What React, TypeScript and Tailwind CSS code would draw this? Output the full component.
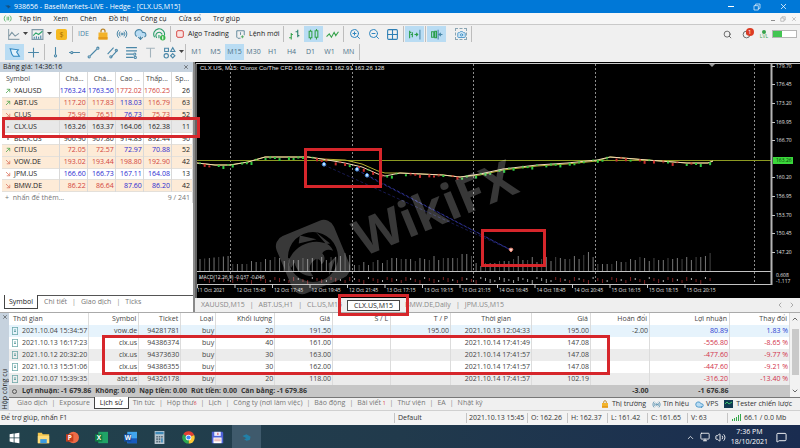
import type { ReactNode } from "react";
import { Camera, ChevronDown, ChevronLeft, ChevronRight, ChevronUp, Cloud, CloudDownload, Grid2x2, MessageSquare, Monitor, Radio, Search, Volume2, X, ZoomIn, ZoomOut } from "lucide-react";
import clsx from "clsx";

const menus = ["Tập tin", "Xem", "Chèn", "Đồ thị", "Công cụ", "Cửa sổ", "Trợ giúp"];
const timeframes = ["M1", "M5", "M15", "M30", "H1", "H4", "D1", "W1", "MN"];

// dir: u = up, d = down, n = unchanged; tone: r = red, b = blue, k = black
const quotes = [
  { s: "XAUUSD", dir: "u", v: ["1763.24", "1763.50", "1772.02", "1760.25"], tone: "bbrr", sp: "26", bg: "bg-white" },
  { s: "ABT.US", dir: "u", v: ["117.20", "117.83", "118.03", "116.79"], tone: "rrbr", sp: "63", bg: "bg-[#fdebd7]" },
  { s: "CI.US", dir: "d", v: ["75.99", "76.51", "76.73", "75.73"], tone: "rrbr", sp: "52", bg: "bg-[#fdebd7]" },
  { s: "CLX.US", dir: "n", v: ["163.26", "163.37", "164.06", "162.38"], tone: "kkkk", sp: "11", bg: "bg-[#e8e8e8]" },
  { s: "BLCK.US", dir: "n", v: ["906.90", "907.80", "914.83", "892.44"], tone: "kkkk", sp: "90", bg: "bg-white" },
  { s: "CITI.US", dir: "u", v: ["72.05", "72.57", "72.97", "70.88"], tone: "rrbb", sp: "52", bg: "bg-[#fdebd7]" },
  { s: "VOW.DE", dir: "d", v: ["193.02", "193.44", "198.80", "192.90"], tone: "rrrr", sp: "42", bg: "bg-[#fdebd7]" },
  { s: "JPM.US", dir: "d", v: ["166.60", "166.73", "167.11", "164.08"], tone: "bbbb", sp: "13", bg: "bg-white" },
  { s: "BMW.DE", dir: "d", v: ["86.22", "86.64", "87.60", "86.20"], tone: "rrbb", sp: "42", bg: "bg-[#fdebd7]" },
];

const deals = [
  ["2021.10.04 15:34:57", "vow.de", "94281781", "buy", "20", "191.50", "", "195.00", "2021.10.13 12:04:33", "195.00", "-2.00", "80.89", "1.83 %"],
  ["2021.10.13 16:17:23", "clx.us", "94386374", "buy", "40", "161.00", "", "", "2021.10.14 17:41:49", "147.08", "", "-556.80", "-8.65 %"],
  ["2021.10.12 20:32:20", "clx.us", "94373630", "buy", "30", "163.00", "", "", "2021.10.14 17:41:57", "147.08", "", "-477.60", "-9.77 %"],
  ["2021.10.13 15:51:06", "clx.us", "94386355", "buy", "30", "162.00", "", "", "2021.10.14 17:41:57", "147.08", "", "-447.60", "-9.21 %"],
  ["2021.10.07 15:39:35", "abt.us", "94326178", "buy", "20", "118.00", "", "", "2021.10.14 17:41:57", "102.19", "", "-316.20", "-13.40 %"],
];
const dealBg = ["bg-[#e6f3fc]", "bg-white", "bg-[#ececec]", "bg-white", "bg-[#ececec]"];
const dealHead = ["Thời gian", "Symbol", "Ticket", "Loại", "Khối lượng", "Giá", "S / L", "T / P", "Thời gian", "Giá", "Hoán đổi", "Lợi nhuận", "Thay đổi"];

const prices: [string, number][] = [
  ["179.70", 4], ["176.45", 22], ["173.20", 41], ["169.95", 60], ["166.70", 78], ["160.20", 115],
  ["156.95", 134], ["153.70", 153], ["150.45", 171], ["147.20", 190], ["0.608", 213], ["-1.117", 219],
];
const times = [
  "11 Oct 2021", "12 Oct 15:45", "12 Oct 17:45", "12 Oct 19:45", "12 Oct 21:45", "13 Oct 17:15", "13 Oct 19:15",
  "13 Oct 21:15", "14 Oct 16:45", "14 Oct 18:45", "14 Oct 20:45", "15 Oct 16:15", "15 Oct 18:15", "15 Oct 20:15",
];
const trend: [number, number][] = [
  [2, 101], [20, 103], [35, 103], [53, 100], [70, 95], [113, 95], [127, 97], [150, 101], [167, 105], [183, 112], [190, 114],
  [205, 111], [248, 113], [265, 115], [285, 112], [308, 107], [342, 103], [372, 101], [402, 98], [415, 95], [428, 96],
  [452, 98], [492, 101], [513, 101], [518, 99],
];
const volumes = [6, 5, 7, 6, 8, 9, 8, 10, 11, 13, 11, 10, 12, 9, 11, 12, 10, 13, 11, 12, 11, 13, 12, 15, 17, 14];

function trendAt(x: number) {
  const i = Math.max(1, trend.findIndex((p) => p[0] >= x));
  const [x0, y0] = trend[i - 1];
  const [x1, y1] = trend[i];
  return y0 + ((y1 - y0) * (x - x0)) / (x1 - x0);
}

const bars = Array.from({ length: 110 }, (_, i) => {
  const x = 5 + i * 4.68;
  const day = (i + 19) % 26;
  const y = trendAt(Math.min(x, 518));
  const up = y <= trendAt(Math.max(3, x - 8));
  return { x, y, up, h: i < 7 ? 12 + ((i * 5) % 5) + i / 2 : volumes[day] + ((i * 7) % 3), bright: i % 3 !== 1 };
});

function Svg({ children, className = "size-[13px]" }: { children: ReactNode; className?: string }) {
  return (
    <svg viewBox="0 0 24 24" fill="none" stroke="currentColor" strokeWidth="2" className={className} aria-hidden="true">
      {children}
    </svg>
  );
}

function Tool({ label, active, children }: { label: string; active?: boolean; children: ReactNode }) {
  return (
    <button
      type="button"
      aria-label={label}
      className={clsx("grid h-4 w-[19px] shrink-0 place-items-center text-[#4a87a8]", active && "bg-[#b9dcf3]")}
    >
      {children}
    </button>
  );
}

const Caret = () => (
  <svg viewBox="0 0 5 4" className="h-1 w-[5px] shrink-0 fill-[#444]" aria-hidden="true">
    <path d="M0 0h5L2.500 3z" />
  </svg>
);

const Sep = () => <span className="mx-px h-4 w-px shrink-0 bg-[#bdbdbd]" />;
const Bar = () => <span className="text-[#888]">|</span>;

const Bag = ({ className }: { className: string }) => (
  <svg viewBox="0 0 24 24" className={className} aria-hidden="true">
    <path d="M8 9V6a4 4 0 0 1 8 0v3" fill="none" stroke="#b98324" strokeWidth="2.500" />
    <path d="M3 9h18v14H3z" fill="#f3b32a" />
    <path d="M3 18h18v5H3z" fill="#e59b1c" />
  </svg>
);

function TitleBar() {
  return (
    <header className="flex h-[13px] items-center bg-[#0078d7] pl-[5px] text-white">
      <svg viewBox="0 0 10 10" className="mr-[3px] size-[6px]" aria-hidden="true">
        <path d="M0 3l6-1 4 3-3 1-2 2-1-3z" fill="#15507f" />
      </svg>
      <h1 className="grow whitespace-nowrap text-[7px]">938656 - BaselMarkets-LIVE - Hedge - [CLX.US,M15]</h1>
      <div className="flex pr-1">
        <button type="button" aria-label="Minimize" className="grid h-3 w-[26px] place-items-center">
          <span className="h-px w-[6px] bg-white" />
        </button>
        <button type="button" aria-label="Restore" className="grid h-3 w-[26px] place-items-center">
          <Svg className="size-[8px]">
            <path d="M3 8h13v13H3zM8 8V3h13v13h-5" />
          </Svg>
        </button>
        <button type="button" aria-label="Close" className="grid h-3 w-[26px] place-items-center">
          <X className="size-[9px]" />
        </button>
      </div>
    </header>
  );
}

function MenuBar() {
  return (
    <nav className="flex h-3 items-center border-b border-[#c9c9c9] bg-[#f6f6f6] pl-[3px]">
      <div className="flex grow items-center gap-3">
        <Svg className="-mr-[5px] size-[9px] text-[#36a64a]">
          <path d="M7 4c-5 3-5 13 0 16M11 7v10M15 7v10M18 4c5 3 5 13 0 16" />
        </Svg>
        {menus.map((m) => (
          <button type="button" key={m}>{m}</button>
        ))}
      </div>
      <div className="flex items-center gap-[5px] pr-[3px] text-[#8f8f8f]">
        <span className="mt-1 h-px w-1 bg-[#8f8f8f]" />
        <Svg className="size-[6px]">
          <path d="M3 8h13v13H3zM8 8V3h13v13h-5" />
        </Svg>
        <X className="size-[6px]" />
      </div>
    </nav>
  );
}

function MainToolbar() {
  return (
    <div className="flex h-[18px] items-center pl-1 pr-[3px]">
      <Tool label="Chart type">
        <Svg><path d="M3 2v19h20" stroke="#8fa2ad" /><path d="M4 15l5-7 6 7 7-5" stroke="#7c95a2" /></Svg>
      </Tool>
      <Caret />
      <Tool label="Indicators">
        <Svg><path d="M2 3h20v18H2z" stroke="#7d98a6" /><path d="M4 14l5-5 5 3 7-6" stroke="#2da56b" /><path d="M6 20v-4M10 20v-5M14 20v-4M18 20v-6" /></Svg>
      </Tool>
      <Caret />
      <Tool label="Symbols">
        <span className="grid size-[11px] place-items-center rounded-xs bg-[#f5b921] text-[7px] leading-none text-[#a87000]">$</span>
      </Tool>
      <Sep />
      <Tool label="MetaEditor"><span className="text-[7px]">IDE</span></Tool>
      <Tool label="Market"><Bag className="size-[12px]" /></Tool>
      <Tool label="Signals"><Radio className="size-[12px]" /></Tool>
      <Tool label="VPS"><CloudDownload className="size-[13px] fill-[#b9dcf3]" /></Tool>
      <Tool label="Community">
        <Svg>
          <path d="M3 17a10 10 0 1 1 18-3M7 18a6 6 0 1 1 10-6M11 19v-6" stroke="#2a9d6a" />
          <circle cx="18" cy="18" r="5" fill="#39b54a" stroke="none" />
          <path d="M18 15v6" stroke="#fff" />
        </Svg>
      </Tool>
      <Sep />
      <button type="button" className="flex w-[60px] shrink-0 items-center gap-1 whitespace-nowrap pl-1">
        <Svg className="size-2 shrink-0 text-[#d8504d]"><rect x="2" y="2" width="20" height="20" rx="4" strokeWidth="3" fill="#fbe3e1" /></Svg>
        Algo Trading
      </button>
      <button type="button" className="flex w-[50px] shrink-0 items-center gap-1 whitespace-nowrap pl-1">
        <Svg className="size-[9px] shrink-0 text-[#3c6e85]"><path d="M12 22H5l-3-3V2h20v12M12 6v7" /><path d="M17 14v8M13 18h8" stroke="#35a24a" /></Svg>
        Lệnh mới
      </button>
      <Sep />
      <Tool label="Bars"><Svg><path d="M6 9v12M2 18h4M6 12h3" stroke="#35a24a" /><path d="M18 3v14M14 7h4M18 14h3" stroke="#27806a" /></Svg></Tool>
      <Tool label="Candles" active><Svg className="size-[13px] text-[#35a24a]"><path d="M4 6h5v12H4zM15 5h5v12h-5zM6.500 3v3M6.500 18v3M17.500 2v3M17.500 17v4" /></Svg></Tool>
      <Tool label="Line"><Svg className="size-[13px] text-[#35a24a]"><path d="M1 16l5-5 4 6 5-9 3 6 5-7" /></Svg></Tool>
      <Sep />
      <Tool label="Zoom in"><ZoomIn className="size-[12px] text-[#2e86c0]" /></Tool>
      <Tool label="Zoom out"><ZoomOut className="size-[12px] text-[#2e86c0]" /></Tool>
      <Tool label="Tile windows"><Grid2x2 className="size-[13px] text-[#2e7fb5]" /></Tool>
      <Sep />
      <Tool label="Auto scroll" active><Svg><path d="M3 5v14M8 8v9M3 8h3" stroke="#2a9d4a" /><path d="M5 12h4M12 12h5M15 9l3 3-3 3" stroke="#2a9d4a" /><path d="M22 3v18" /></Svg></Tool>
      <Sep />
      <Tool label="Chart shift" active><Svg><path d="M3 7h4v10H3zM9 6h3v12H9z" stroke="#2a9d4a" /><path d="M15 3v18M23 12h-5M20 9l-3 3 3 3" /></Svg></Tool>
      <span className="w-[5px]" />
      <Tool label="Screenshot">
        <span className="grid size-[12px] place-items-end border border-dashed border-[#8aa5b3]"><Camera className="size-[9px] fill-[#cfe6f5] text-[#2e86c0]" /></span>
      </Tool>
      <Sep />
      <div className="ml-auto flex items-center">
        <Tool label="Search"><Search className="size-[9px] text-[#444]" /></Tool>
        <Tool label="Notifications">
          <span className="relative">
            <Svg className="size-[9px] text-[#444]"><circle cx="12" cy="12" r="9" /><path d="M12 12V5" /></Svg>
            <span className="absolute -top-[2px] left-1 size-2 rounded-full bg-[#dc3b24] text-center text-[6px] leading-[8px] text-white">1</span>
          </span>
        </Tool>
        <span className="mx-1 flex flex-col items-center text-[5px] leading-[5px] text-[#35a24a]">
          <span className="size-[4px] rounded-full bg-[#35a24a]" />
          LVL
        </span>
        <span className="flex h-2 w-[25px] border border-[#b5b5b5] bg-white"><span className="w-[9px] bg-[#43c552]" /></span>
      </div>
    </div>
  );
}

function DrawToolbar() {
  return (
    <div className="flex h-[19px] items-center pb-px pl-[5px]">
      <Tool label="Cursor" active><Svg><path d="M4 5l15 2-3 4 5 8H10l-3-4z" fill="#e1f1fb" stroke="#2e86c0" /></Svg></Tool>
      <Tool label="Crosshair"><Svg><path d="M12 3v18M2 12h20" /></Svg></Tool>
      <Sep />
      <Tool label="Vertical line"><Svg><path d="M12 2v14" /><circle cx="12" cy="18" r="2" /></Svg></Tool>
      <Tool label="Horizontal line"><Svg><path d="M2 12h3M9 12h13" /><circle cx="7" cy="12" r="2" /></Svg></Tool>
      <Tool label="Trend line"><Svg><path d="M6 18L18 6" /><circle cx="4" cy="20" r="2" /><circle cx="20" cy="4" r="2" /></Svg></Tool>
      <Tool label="Channel"><Svg><path d="M3 15L14 3M10 20L21 8" /><circle cx="9" cy="20" r="2" /><circle cx="19" cy="8" r="2" /></Svg></Tool>
      <Tool label="Fibonacci"><Svg><path d="M2 3h20M2 9h20M2 15h13M2 21h14" /><circle cx="18" cy="15" r="2" /><circle cx="19" cy="21" r="2" /></Svg></Tool>
      <Tool label="Text"><Svg className="size-[13px] text-[#a3b3bc]"><path d="M4 4h16M12 4v17" /></Svg></Tool>
      <Tool label="Shapes"><Svg><path d="M3 4h7v6H3zM14 10l4-7 4 7z" /><circle cx="6" cy="18" r="4" /><path d="M18 14l4 4-4 4-4-4z" /></Svg></Tool>
      <Caret />
      <Sep />
      {timeframes.map((t) => (
        <Tool key={t} label={t} active={t === "M15"}><span className="text-[7px] text-[#4d7288]">{t}</span></Tool>
      ))}
      <Sep />
    </div>
  );
}

const tones: Record<string, string> = { r: "text-[#d2453c]", b: "text-[#2a2ad0]", k: "text-[#222]" };

function MarketWatch() {
  return (
    <aside className="flex w-[195px] shrink-0 flex-col border-r-2 border-[#8a8a8a] bg-white">
      <div className="flex h-[10px] items-center justify-between bg-[#c6d2de] pl-[3px] pr-1">
        <h2>Bảng giá: 14:36:16</h2>
        <button type="button" aria-label="Close panel"><X className="size-[6px]" /></button>
      </div>
      <div className="relative pl-[2px]">
        <table className="h-[131px] w-full table-fixed border-r border-[#d9d9d9]">
          <colgroup>
            <col className="w-[57px]" /><col className="w-[28px]" /><col className="w-[28px]" />
            <col className="w-[28px]" /><col className="w-[28px]" /><col className="w-[21px]" />
          </colgroup>
          <thead>
            <tr className="h-[14px] text-right text-[#444]">
              <th className="pl-1 text-left font-normal">Symbol</th>
              {["Chá...", "Chá...", "Cao ...", "Thấp...", "Sp..."].map((h, i) => (
                <th key={i} className="border-l border-[#d9d9d9] pr-[3px] font-normal">{h}</th>
              ))}
            </tr>
          </thead>
          <tbody>
            {quotes.map((q) => (
              <tr key={q.s} className={clsx("border-b border-[#e4e0da] text-right", q.bg)}>
                <td className="text-left">
                  <span className="flex items-center">
                    <span className="grid w-3 place-items-center">
                      {q.dir === "n" ? (
                        <span className="size-[2px] rounded-full bg-[#888]" />
                      ) : (
                        <Svg className={clsx("size-[6px]", q.dir === "u" ? "text-[#45a045]" : "text-[#d9705a]")}>
                          {q.dir === "u" ? <path d="M4 20L19 5M7 5h12v12" strokeWidth="3" /> : <path d="M4 4l15 15M19 7v12H7" strokeWidth="3" />}
                        </Svg>
                      )}
                    </span>
                    {q.s}
                  </span>
                </td>
                {q.v.map((v, i) => (
                  <td key={i} className={clsx("border-l border-[#d9d9d9] pr-px", tones[q.tone[i]])}>{v}</td>
                ))}
                <td className="border-l border-[#d9d9d9] pr-[2px]">{q.sp}</td>
              </tr>
            ))}
            <tr className="text-[#777]">
              <td colSpan={4} className="pl-[3px]">+ <span className="pl-[2px]">nhấn để thêm...</span></td>
              <td colSpan={2} className="pr-[2px] text-right">9 / 241</td>
            </tr>
          </tbody>
        </table>
        <span className="absolute left-[2px] top-[45px] z-10 h-[21px] w-[198px] border-3 border-[#d6262b]" />
      </div>
      <div className="mt-auto flex h-[17px] items-start text-[#777]">
        <button type="button" className="ml-1 h-[14px] border-x border-b border-[#444] px-1 text-[#222]">Symbol</button>
        <div className="flex h-full grow items-start gap-[5px] border-t border-[#555] pl-[6px] pt-px">
          <button type="button">Chi tiết</button><Bar />
          <button type="button">Giao dịch</button><Bar />
          <button type="button">Ticks</button>
        </div>
      </div>
    </aside>
  );
}

function Chart() {
  const line = trend.map((p) => p.join(",")).join(" ");
  const slow = trend.map(([x, y], i) => `${x},${y + (i > 6 && i < 11 ? -3 : i > 13 && i < 19 ? 1 : 0)}`).join(" ");
  return (
    <svg viewBox="0 0 605 236" className="block w-full bg-black" role="img" aria-label="CLX.US M15">
      <path d="M1 236V1.500H605" fill="none" stroke="#c8c8c8" />
      <g stroke="#8d8d8d" strokeDasharray="2 2">
        {[35, 157, 278, 400, 559].map((x) => <path key={x} d={`M${x + 0.5} 2V222`} />)}
      </g>
      <path d="M2 98.500H576" stroke="#8c9a22" />

      {bars.map((b, i) => (
        <g key={i}>
          <path d={`M${b.x} ${209 - b.h}V209`} stroke={b.bright ? "#777" : "#444"} />
          <path d={`M${b.x} ${215 + (i % 4)}v${2 + (i % 3)}`} stroke={i > 60 && i < 75 ? "#999" : i % 3 ? "#7d2424" : "#aaa"} />
        </g>
      ))}

      <g stroke="#2c308f" strokeDasharray="3 2" fill="none">
        <path d="M129 103L316 188" opacity=".55" />
        <path d="M162 108L316 188" />
        <path d="M172 114L316 188" opacity=".7" />
      </g>
      <polyline points={slow} fill="none" stroke="#b8b030" />
      <polyline points={line} fill="none" stroke="#f3d9b8" />
      {bars.map((b, i) =>
        i % 5 === 3 ? null : (
          <path key={i} d={`M${b.x} ${b.y - 1 + (i % 3)}v${2 + (i % 2)}`} stroke={b.up || i % 4 === 0 ? "#30c940" : "#c92c2c"} strokeWidth="2" opacity={i % 3 ? 1 : 0.6} />
        ),
      )}
      <g fill="#bfe4ff" stroke="#3e7fd0">
        {[[129, 102], [162, 107], [172, 113]].map(([x, y]) => <path key={x} d={`M${x - 2} ${y}l2-2 2 2-1 2h-2z`} />)}
      </g>
      <path d="M314 187l2-1 2 1-1 2-1 1-1-1z" fill="#ffd5c8" stroke="#e08070" />

      {/* watermark */}
      <g fill="#fff" opacity=".22">
        <g transform="translate(118 195) rotate(-22.500)">
          <path fillRule="evenodd" d="M-20-31h40a11 11 0 0 1 11 11v40a11 11 0 0 1-11 11h-40a11 11 0 0 1-11-11v-40a11 11 0 0 1 11-11zM0-25a25 25 0 1 0 0 50 25 25 0 0 0 0-50z" />
          <path d="M-24-6C-14-16 2-18 14-10c5 3 7 7 7 12-4-4-8-4-11-2 2 5-1 9-5 10 1-4 0-6-3-7-8 1-12 7-9 15-10-4-14-12-12-20l-6 4zM-4-25l14 10-18-3zM12-22l9 16-4-1zM22 8l-14 15 4-11z" />
        </g>
        <text transform="translate(168 195) rotate(-22.500)" className="font-['Open_Sans',sans-serif] text-[50px] font-bold">WikiFX</text>
      </g>

      <path d="M2 209.500H576M2 222.500H576" stroke="#c4c4c4" />
      <path d="M576.500 2V223" stroke="#b5b5b5" strokeWidth="2" />
      <path d="M514 2h6l-3 3z" fill="#999" />
      <g className="fill-[#e4e4e4] font-['Open_Sans','Liberation_Sans',sans-serif] text-[5px]">
        <text x="5" y="8" className="font-['Liberation_Sans',sans-serif] text-[6px]">CLX.US, M15: Clorox Co/The CFD 162.92 163.31 162.91 163.26 128</text>
        <text x="4" y="217">MACD(12,26,9) -0.037 -0.046</text>
        {times.map((t, i) => (
          <g key={t}>
            <path d={`M${2.500 + i * 37.5} 223v3`} stroke="#c4c4c4" />
            <text x={i ? 4 + i * 37.5 : 2} y="230">{t}</text>
          </g>
        ))}
        {prices.map(([p, y]) => (
          <g key={p}>
            {y < 200 && <path d={`M577 ${y}.500h3`} stroke="#c4c4c4" />}
            <text x="581" y={y + 2}>{p}</text>
          </g>
        ))}
        <rect x="578" y="95" width="20" height="7" fill="#3bd83b" />
        <text x="581" y="100" className="fill-[#0a3a0a]">163.26</text>
      </g>
      <g fill="none" stroke="#d6262b" strokeWidth="3">
        <rect x="110.500" y="87.500" width="75" height="37" />
        <rect x="287.500" y="168.500" width="62" height="35" />
      </g>
    </svg>
  );
}

function ChartTabs() {
  return (
    <div className="flex h-[14px] items-center gap-[5px] bg-[#efefef] pl-[6px] pr-1 text-[#888]">
      <button type="button">XAUUSD,M15</button><Bar />
      <button type="button">ABT.US,H1</button><Bar />
      <button type="button">CL.US,M15</button>
      <span className="relative">
        <button type="button" className="h-[11px] border border-[#444] bg-white px-[6px] text-[#222]">CLX.US,M15</button>
        <span className="absolute -inset-x-[9px] -bottom-[5px] -top-[6px] z-10 border-3 border-[#d6262b]" />
      </span>
      <button type="button">BMW.DE,Daily</button><Bar />
      <button type="button">JPM.US,M15</button>
      <span className="ml-auto flex gap-1">
        <ChevronLeft className="size-2" /><ChevronRight className="size-2" />
      </span>
    </div>
  );
}

function History() {
  return (
    <div className="relative flex">
      <table className="grow table-fixed whitespace-nowrap bg-white text-right text-[#444]">
        <colgroup>
          <col className="w-[78px]" /><col className="w-[50px]" /><col className="w-[42px]" /><col className="w-[35px]" />
          <col className="w-[59px]" /><col className="w-[58px]" /><col className="w-[58px]" /><col className="w-[60px]" />
          <col className="w-[81px]" /><col className="w-[59px]" /><col className="w-[59px]" /><col className="w-[80px]" /><col className="w-[60px]" />
        </colgroup>
        <thead>
          <tr className="h-3">
            {dealHead.map((h, i) => (
              <th
                key={i}
                className={clsx("border-r border-[#dcdcdc] font-normal", i === 0 ? "pl-1 text-left" : i === 8 ? "pr-5" : "pr-[2px]")}
              >
                {h}
              </th>
            ))}
          </tr>
        </thead>
        <tbody>
          {deals.map((d, r) => (
            <tr key={r} className={clsx("h-3", dealBg[r])}>
              {d.map((c, i) => (
                <td
                  key={i}
                  className={clsx(
                    "border-r border-[#dcdcdc] pr-px",
                    i === 0 && "text-left",
                    i > 10 && (c.startsWith("-") ? "text-[#d2304a]" : "text-[#2a3ad0]"),
                  )}
                >
                  {i === 0 ? (
                    <span className="flex items-center gap-1 pl-[3px]">
                      <Svg className="h-2 w-[6px] text-[#3d8c8c]"><path d="M1-3h22v30H1zM8 8h8M8 14h8" strokeWidth="3" /></Svg>
                      {c}
                    </span>
                  ) : c}
                </td>
              ))}
            </tr>
          ))}
          <tr className="h-3 bg-[#c6c6c6] font-bold text-[#333]">
            <td colSpan={10} className="text-left">
              <span className="flex items-center gap-1 pl-[3px]">
                <span className="mr-px size-[5px] rounded-full border border-[#555]" />
                <span>Lợi nhuận: -1 679.86</span><span>Không: 0.00</span><span>Nạp tiền: 0.00</span>
                <span>Rút tiền: 0.00</span><span>Cân bằng: -1 679.86</span>
              </span>
            </td>
            <td className="pr-px">-3.00</td>
            <td className="pr-px">-1 676.86</td>
            <td />
          </tr>
        </tbody>
      </table>
      <div className="flex w-[10px] shrink-0 flex-col items-center justify-between bg-[#f2f2f2] py-[2px]">
        <ChevronUp className="size-2" />
        <span className="mb-3 mt-[6px] w-[7px] grow bg-[#c9c9c9]" />
        <ChevronDown className="size-2" />
      </div>
      <span className="absolute left-[11.700%] right-[24%] top-[22px] h-[40px] border-3 border-[#d6262b]" />
    </div>
  );
}

function ToolboxTabs() {
  return (
    <div className="flex h-[13px] items-start gap-1 whitespace-nowrap border-t border-[#777] px-2 text-[#777]">
      <button type="button">Giao dịch</button><Bar />
      <button type="button">Exposure</button>
      <button type="button" className="-mt-px h-3 border border-t-0 border-[#444] bg-white px-[5px] text-[#222]">Lịch sử</button>
      <button type="button">Tin tức</button><Bar />
      <button type="button">Hộp thư<span className="text-[5px] text-[#d6262b]">6</span></button><Bar />
      <button type="button">Lịch</button><Bar />
      <button type="button">Công ty (nơi làm việc)</button><Bar />
      <button type="button">Báo động</button><Bar />
      <button type="button">Bài viết <span className="text-[5px] text-[#d6262b]">1</span></button><Bar />
      <button type="button">Thư viện</button><Bar />
      <button type="button">EA</button><Bar />
      <button type="button">Nhật ký</button>
      <div className="ml-auto flex items-center gap-[6px] pt-px text-[#333]">
        <button type="button" className="flex items-center gap-[3px]"><Bag className="size-2" />Thị trường</button>
        <button type="button" className="flex items-center gap-[2px]"><Radio className="size-[9px] text-[#4a87a8]" />Tín hiệu</button>
        <button type="button" className="flex items-center gap-[2px]"><Cloud className="size-[9px] fill-[#b9dcf3] text-[#2e86c0]" />VPS</button>
        <button type="button" className="flex items-center gap-[3px]">
          <svg viewBox="0 0 9 8" className="h-2 w-[9px]" aria-hidden="true"><path d="M0 0h9v8H0z" fill="#123b52" /><path d="M1 4l2-2 2 2 3-2" fill="none" stroke="#39c46b" /></svg>
          Tester chiến lược
        </button>
      </div>
    </div>
  );
}

function StatusBar() {
  return (
    <footer className="flex h-[15px] items-center whitespace-nowrap border-t border-[#d0d0d0] bg-[#f3f3f3] pb-px text-[#333]">
      <span className="grow pl-px">Để trợ giúp, nhấn F1</span>
      <span className="w-[72px] border-l border-[#c4c4c4] pl-[3px]">Default</span>
      <span className="w-[61px] border-l border-[#c4c4c4] pl-[2px]">2021.10.13 15:45</span>
      {["O: 162.26", "H: 162.37", "L: 161.42", "C: 161.65", "V: 63"].map((v) => (
        <span key={v} className="w-[40px] border-l border-[#c4c4c4] pl-[3px]">{v}</span>
      ))}
      <span className="flex w-[73px] items-center gap-[3px] border-l border-[#c4c4c4] pl-1">
        <svg viewBox="0 0 9 7" className="h-[7px] w-[9px] fill-[#35a84a]" aria-hidden="true"><path d="M0 5h1v2H0zM2 4h1v3H2zM4 3h1v4H4zM6 1h1v6H6zM8 0h1v7H8z" /></svg>
        66.1 / 0.0 Mb
      </span>
    </footer>
  );
}

function TaskButton({ label, active, children }: { label: string; active?: boolean; children: ReactNode }) {
  return (
    <button
      type="button"
      aria-label={label}
      className={clsx("grid h-6 w-[29px] shrink-0 place-items-center", active && "bg-[#3f5a6c]")}
    >
      <svg viewBox="0 0 16 16" className="size-[13px]" aria-hidden="true">{children}</svg>
    </button>
  );
}

function Taskbar() {
  return (
    <div className="flex h-6 items-center bg-linear-to-r from-[#22424c] via-[#213a4c] to-[#1a2c50] text-white">
      <TaskButton label="Start"><path d="M2 4l5-1v5H2zM8 3l6-1v6H8zM2 9h5v5l-5-1zM8 9h6v6l-6-1z" fill="#fff" /></TaskButton>
      <TaskButton label="Explorer"><path d="M1 2h5l1 2h8v11H1z" fill="#f4c64e" /><path d="M1 6h14v9H1z" fill="#ffdd7d" /><path d="M4 10h8v5H4z" fill="#3b9be0" /></TaskButton>
      <TaskButton label="PowerPoint"><circle cx="9" cy="8" r="7" fill="#ed6c47" /><path d="M0 4h9v9H0z" fill="#c43e1c" /><text x="2" y="11" fontSize="8" fontWeight="bold" fill="#fff">P</text></TaskButton>
      <TaskButton label="Excel"><path d="M4 1h12v14H4z" fill="#21a366" /><path d="M0 4h9v9H0z" fill="#107c41" /><text x="2" y="11" fontSize="8" fontWeight="bold" fill="#fff">X</text></TaskButton>
      <TaskButton label="Word"><path d="M4 1h12v14H4z" fill="#41a5ee" /><path d="M4 9h12v6H4z" fill="#185abd" /><path d="M0 4h9v9H0z" fill="#124b9c" /><text x="1" y="11" fontSize="8" fontWeight="bold" fill="#fff">W</text></TaskButton>
      <TaskButton label="Calculator"><path d="M2 0h12v16H2z" fill="#b9c7d0" /><path d="M3 1h10v3H3z" fill="#3d89b8" /><path d="M4 6h2v2H4zM7 6h2v2H7zM10 6h2v2h-2zM4 9h2v2H4zM7 9h2v2H7zM4 12h2v2H4zM7 12h2v2H7z" fill="#546a78" /><path d="M10 9h2v5h-2z" fill="#3d89b8" /></TaskButton>
      <TaskButton label="Chrome"><path d="M8 8L1.500 4A7.500 7.500 0 0 1 15 5z" fill="#e34133" /><path d="M8 8l7-3a7.500 7.500 0 0 1-7 10.500z" fill="#fcc934" /><path d="M8 8v7.500A7.500 7.500 0 0 1 1.500 4z" fill="#2da94f" /><circle cx="8" cy="8" r="3.500" fill="#fff" /><circle cx="8" cy="8" r="2.600" fill="#4285f4" /></TaskButton>
      <TaskButton label="Commander"><path d="M1 1h13l1 1v13H1z" fill="#4f62d8" /><path d="M4 1h8v5H4z" fill="#e8ecff" /><path d="M8 2h1v3H8z" fill="#d6262b" /><path d="M3 8h10v7H3z" fill="#fff" /><path d="M4 10h8M4 12h8" stroke="#c44" strokeWidth=".6" /></TaskButton>
      <TaskButton label="MetaTrader" active><path d="M3 6l5-2 5 3-1 4-4 1-3-2 3-1z" fill="#2180a8" /></TaskButton>
      <div className="ml-auto flex items-center gap-[5px] pr-[13px]">
        <ChevronUp className="size-[9px]" />
        <Monitor className="size-[10px]" />
        <Volume2 className="size-[11px]" />
        <div className="text-center leading-[10px]">
          <p>7:36 PM</p>
          <p>18/10/2021</p>
        </div>
        <MessageSquare className="ml-[3px] size-[11px]" />
      </div>
    </div>
  );
}

export default function App() {
  return (
    <div className="overflow-x-hidden bg-[#f0f0f0] font-['Open_Sans','Noto_Sans',sans-serif] text-[7px] leading-[10px] text-[#222]">
      <TitleBar />
      <MenuBar />
      <MainToolbar />
      <DrawToolbar />
      <main className="flex">
        <MarketWatch />
        <section className="min-w-0 grow">
          <Chart />
          <ChartTabs />
        </section>
      </main>
      <section className="flex border-t border-[#aaa]">
        <div className="flex w-[9px] shrink-0 flex-col items-center justify-between bg-[#c6d2de] pt-px">
          <X className="size-[6px]" />
          <span className="rotate-180 whitespace-nowrap [writing-mode:vertical-rl]">Hộp công cụ</span>
        </div>
        <div className="min-w-0 grow">
          <History />
          <ToolboxTabs />
        </div>
      </section>
      <StatusBar />
      <Taskbar />
    </div>
  );
}
